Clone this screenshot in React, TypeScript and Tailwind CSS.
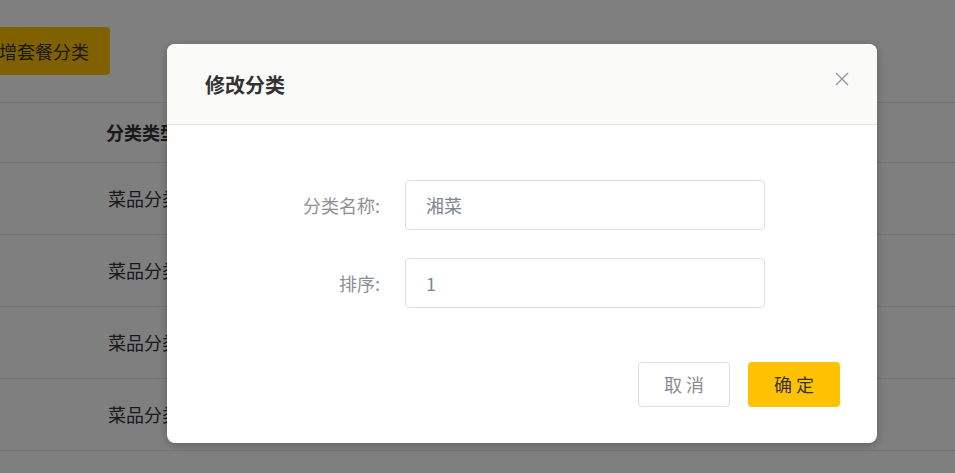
import React from "react";

const font = { fontFamily: '"Noto Sans CJK SC", "Noto Sans", sans-serif' };

export default function App() {
  const rows = ["菜品分类", "菜品分类", "菜品分类", "菜品分类"];
  return (
    <div className="relative h-[473px] w-full overflow-hidden bg-white" style={font}>
      {/* underlying page */}
      <div className="flex flex-col">
        <div className="flex h-[102px] items-start pt-[27px]">
          <button className="-ml-[39px] flex h-[48px] items-center whitespace-nowrap rounded-[4px] bg-[#ffc200] pl-[20px] pr-[21px] text-[18px] text-[#333333]">
            新增套餐分类
          </button>
        </div>
        <div className="flex h-[61px] items-center border-t border-b border-[#e6e6e6] pl-[106px] text-[18px] font-bold text-[#333333]">
          分类类型
        </div>
        {rows.map((r, i) => (
          <div
            key={i}
            className="flex h-[72px] items-center border-b border-[#e6e6e6] pl-[108px] text-[18px] text-[#333333]"
          >
            {r}
          </div>
        ))}
      </div>

      {/* overlay */}
      <div className="absolute inset-0 bg-black/50">
        <div className="ml-[167px] mt-[44px] w-[710px] overflow-hidden rounded-[8px] bg-white shadow-[0_2px_8px_rgba(0,0,0,0.25)]">
          <div className="flex h-[81px] items-center justify-between border-b border-[#e4e4e4] bg-[#fafaf9] pl-[38px] pr-[28px]">
            <span className="pt-[2px] text-[20px] font-bold text-[#333333]">修改分类</span>
            <svg width="14" height="14" viewBox="0 0 14 14" className="-mt-[10px]">
              <path d="M1 1 L13 13 M13 1 L1 13" stroke="#909399" strokeWidth="1.3" fill="none" />
            </svg>
          </div>
          <div className="flex flex-col pt-[55px]">
            <div className="flex items-center">
              <label className="w-[238px] pr-[25px] text-right text-[18px] text-[#8e9096]">分类名称:</label>
              <div className="flex h-[50px] w-[360px] items-center rounded-[4px] border border-[#dcdfe6] px-[20px] text-[18px] text-[#818693]">
                湘菜
              </div>
            </div>
            <div className="mt-[28px] flex items-center">
              <label className="w-[238px] pr-[25px] text-right text-[18px] text-[#8e9096]">排序:</label>
              <div className="flex h-[50px] w-[360px] items-center rounded-[4px] border border-[#dcdfe6] px-[20px] text-[18px] text-[#818693]">
                1
              </div>
            </div>
            <div className="mt-[54px] flex justify-end gap-[18px] pb-[36px] pr-[37px]">
              <button className="flex h-[45px] w-[92px] items-center justify-center rounded-[4px] border border-[#dcdfe6] bg-white text-[18px] text-[#8a8d95]">
                取 消
              </button>
              <button className="flex h-[45px] w-[92px] items-center justify-center rounded-[4px] bg-[#ffc200] text-[18px] text-[#333333]">
                确 定
              </button>
            </div>
          </div>
        </div>
      </div>
    </div>
  );
}
